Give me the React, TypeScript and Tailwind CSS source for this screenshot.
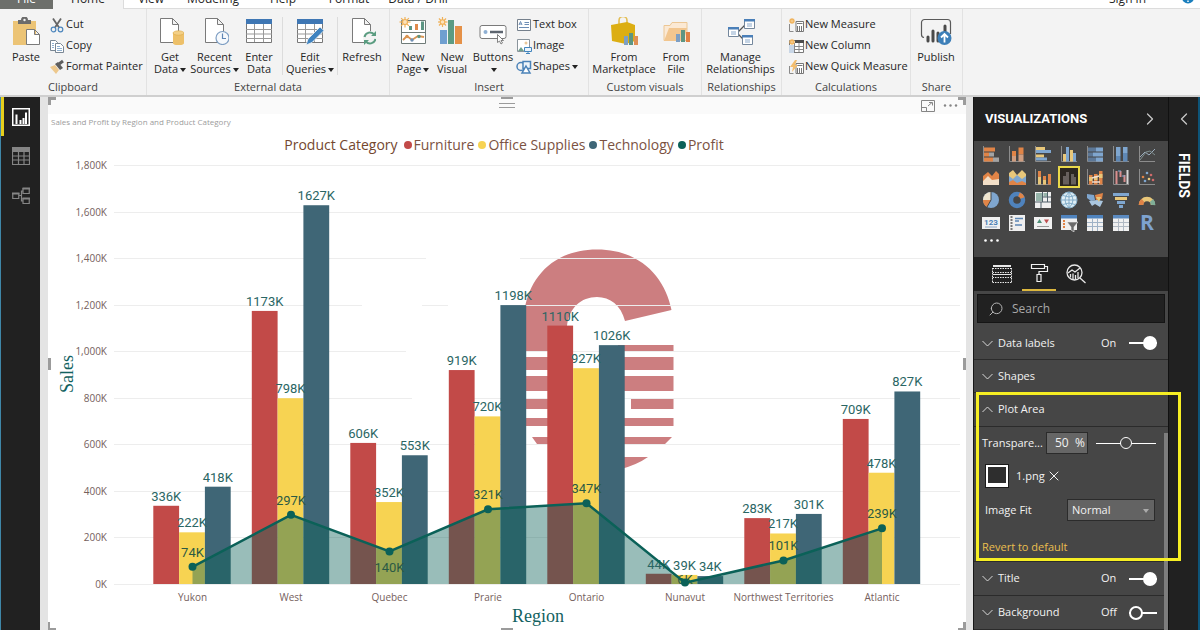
import React from "react";
import { ChevronLeft, ChevronRight, Search, X } from "lucide-react";

/* ---------- ribbon icons ---------- */

const Big = ({ children }: { children: React.ReactNode }) => (
  <svg viewBox="0 0 28 28" className="h-7 w-7 shrink-0" fill="none" aria-hidden="true">
    {children}
  </svg>
);

const Small = ({ children }: { children: React.ReactNode }) => (
  <svg viewBox="0 0 16 16" className="h-4 w-4 shrink-0" fill="none" aria-hidden="true">
    {children}
  </svg>
);

const Sheet = () => <path d="M4.5 1.5h12l6 6v18h-18zM16.5 1.5v6h6" fill="#fff" stroke="#7a7a7a" />;

const Spark = ({ x, y, r }: { x: number; y: number; r: number }) => (
  <g stroke="#f0b25a" strokeWidth="1.2" transform={`translate(${x} ${y})`}>
    {[0, 45, 90, 135].map((a) => (
      <path key={a} d={`M${-r} 0H${r}`} transform={`rotate(${a})`} />
    ))}
    <circle r={r / 2.2} fill="#fbe3bd" />
  </g>
);

const PasteIcon = () => (
  <Big>
    <path d="M1 4h23v24H1z" fill="#ecc476" />
    <path d="M6 3h3a3.500 3.500 0 0 1 7 0h3v4H6z" fill="#6b6b6b" />
    <circle cx="12.500" cy="3" r="1.200" fill="#f3f3f3" />
    <path d="M14.500 12.500h8l5 5v10h-13zM22.500 12.500v5h5" fill="#fff" stroke="#7a7a7a" />
  </Big>
);

const GetDataIcon = () => (
  <Big>
    <Sheet />
    <path d="M17 16v10c0 3 11 3 11 0V16z" fill="#edc069" />
    <ellipse cx="22.5" cy="16" rx="5.500" ry="2.200" fill="#f3cf86" stroke="#dba945" strokeWidth=".6" />
  </Big>
);

const RecentIcon = () => (
  <Big>
    <Sheet />
    <circle cx="21.500" cy="21" r="6.500" fill="#f6f9fc" stroke="#7f9fc4" strokeWidth="1.200" />
    <path d="M21.500 16.500V21.500H25" stroke="#5f86b5" strokeWidth="1.200" />
  </Big>
);

const Grid = () => (
  <>
    <path d="M1.500 2.500h25v23h-25z" fill="#fff" stroke="#777" />
    <path d="M1 2h26v5H1z" fill="#3f77b4" />
    <path d="M1 12.500h26M1 17h26M1 21.500h26M9.500 7v18M18.500 7v18" stroke="#999" />
  </>
);

const EnterIcon = () => (
  <Big>
    <Grid />
  </Big>
);

const EditIcon = () => (
  <Big>
    <Grid />
    <path d="M10 28l2-6L24 10l4 3.500L16 25.500z" fill="#3f83c0" stroke="#f3f3f3" strokeWidth=".8" />
  </Big>
);

const RefreshIcon = () => (
  <Big>
    <Sheet />
    <circle cx="22" cy="21" r="7" fill="#f3f3f3" />
    <path d="M16.500 20a5.500 5.500 0 0 1 10-2M27.500 22a5.500 5.500 0 0 1-10 2" stroke="#5a9c80" strokeWidth="2" />
    <path d="M28 14v5h-5zM16 28v-5h5z" fill="#5a9c80" />
  </Big>
);

const NewPageIcon = () => (
  <Big>
    <path d="M2.500 3.500h24v23h-24zM2.500 15.500h24" fill="#fff" stroke="#6f7b78" />
    <path d="M10 9h3v4h-3zM22 4.500h3V13h-3z" fill="#5c9583" />
    <path d="M16 7h3v6h-3z" fill="#e08a4c" />
    <path d="M4 23l4-4 5 4 6-4 6 1" stroke="#d99452" strokeWidth="1.800" />
    <circle cx="8" cy="19.500" r="1.700" fill="#d99452" />
    <circle cx="13" cy="23" r="1.700" fill="#6f8fb5" />
    <circle cx="20" cy="19.500" r="1.700" fill="#5c9583" />
    <Spark x={6} y={5} r={5.5} />
  </Big>
);

const NewVisualIcon = () => (
  <Big>
    <path d="M2 13h7v14H2z" fill="#6f9fd0" />
    <path d="M10 3h6v24h-6z" fill="#5c9b83" />
    <path d="M17 9h7v18h-7z" fill="#e59148" />
    <Spark x={4.500} y={5} r={5} />
  </Big>
);

const ButtonsIcon = () => (
  <Big>
    <rect x="1" y="8.500" width="26" height="13" rx="2" fill="#fff" stroke="#7a7a7a" />
    <circle cx="6.500" cy="15" r="2" fill="#8fb0d4" />
    <path d="M11 15h13" stroke="#5e6670" strokeWidth="2.500" />
    <path d="M18.500 17.500v8l2-1.500 1.500 3 1.500-1-1.500-2.500h2.500z" fill="#fff" stroke="#666" strokeWidth=".8" />
  </Big>
);

const MarketIcon = () => (
  <Big>
    <path d="M9 7V3.500a4 4 0 0 1 8 0V8" stroke="#e3bd52" strokeWidth="1.600" />
    <path d="M1 8l16-3 8 3v16l-9 3-14-3z" fill="#dcae12" />
    <path d="M14 19h4v9h-4z" fill="#7d9fc4" />
    <path d="M19 16h4v12h-4z" fill="#5c9583" />
    <path d="M24 19h4v9h-4z" fill="#df8f55" />
  </Big>
);

const FileIcon = () => (
  <Big>
    <path d="M2 8.500h6l2-3h15v18H2z" fill="#fbe9d4" stroke="#ecc795" />
    <path d="M2 24l5-13h18l-3 13z" fill="#f2c68f" />
    <path d="M14 17h4v8h-4z" fill="#7d9fc4" />
    <path d="M19 13h4v12h-4z" fill="#5c9583" />
    <path d="M24 15h4v10h-4z" fill="#df8044" />
  </Big>
);

const RelationIcon = () => (
  <Big>
    <path d="M11 15l7-7M11 17l5 5" stroke="#555" strokeWidth="1.300" />
    {[
      [1, 10],
      [17, 2],
      [15, 18],
    ].map(([x, y]) => (
      <g key={x}>
        <path d={`M${x + 0.5} ${y + 0.5}h10v9h-10z`} fill="#fff" stroke="#74879c" />
        <path d={`M${x} ${y}h11v2.500h-11z`} fill="#4a7fb8" />
        <path d={`M${x + 3} ${y + 5}h5M${x + 3} ${y + 7}h5`} stroke="#8aa9cb" />
      </g>
    ))}
  </Big>
);

const PublishIcon = () => (
  <svg viewBox="0 0 32 28" className="h-7 w-8 shrink-0" fill="none" aria-hidden="true">
    <path d="M4 20.500a3 3 0 0 1-2.500-3v-12a3 3 0 0 1 3-3h23a3 3 0 0 1 3 3V17" stroke="#5a5a5a" strokeWidth="1.200" />
    <path d="M8 20v4M13 14v10M18 16v8M25 9v9" stroke="#4a4a4a" strokeWidth="3" strokeLinecap="round" />
    <circle cx="24.500" cy="21" r="7" fill="#3d7fb8" />
    <path d="M24.500 25.500v-8M21 20.500l3.500-3.500 3.500 3.500" stroke="#fff" strokeWidth="1.800" />
  </svg>
);

const CutIcon = () => (
  <Small>
    <path d="M4 1.500l6 9M12 1.500l-6 9" stroke="#666" strokeWidth="1.800" />
    <circle cx="4.500" cy="12.500" r="2.300" stroke="#4d86bd" strokeWidth="1.200" />
    <circle cx="11.500" cy="12.500" r="2.300" stroke="#4d86bd" strokeWidth="1.200" />
  </Small>
);

const CopyIcon = () => (
  <Small>
    <path d="M1.500 2.500h5l2 2v8h-7z" fill="#fff" stroke="#7a8794" />
    <path d="M6.500 5.500h5l3 3v6h-8z" fill="#fff" stroke="#7a8794" />
    <path d="M8 8.500h3M8 10.500h5M8 12.500h5M3 5.500h2M3 7.500h2M3 9.500h2" stroke="#8fb0d0" />
  </Small>
);

const PainterIcon = () => (
  <Small>
    <path d="M1 8l5-2 4 5-3 4z" fill="#edc88d" />
    <path d="M6 5l3-2 5 6-3 2z" fill="#5d5d5d" />
    <path d="M10 5l4-3" stroke="#5d5d5d" strokeWidth="3" />
  </Small>
);

const TextBoxIcon = () => (
  <Small>
    <path d="M1.500 2.500h13v11h-13z" fill="#fff" stroke="#75808c" />
    <path d="M3 8l1.500-3.500L6 8M3.500 7h2M8.500 5.500h4.500M8.500 7.500h4.500M3 10.500h10" stroke="#6d8db5" />
  </Small>
);

const ImageIcon = () => (
  <Small>
    <path d="M1.500 1.500h12v12h-12z" fill="#fff" stroke="#8a949c" />
    <path d="M2 13l3-4 3 4z" fill="#6fa08c" />
    <path d="M8.500 9.500h7v4h-7zM10 15.500h4M12 13.500v2" fill="#eaf3fb" stroke="#4285bd" />
    <circle cx="10" cy="5" r="1.500" fill="#e9c79a" />
  </Small>
);

const ShapesIcon = () => (
  <Small>
    <circle cx="5" cy="7.500" r="4" stroke="#4b82b8" strokeWidth="1.500" />
    <path d="M7 2.500h7.500v7H7z" stroke="#4b82b8" strokeWidth="1.500" fill="#eef4fa" />
    <path d="M10 7l4 7H6z" stroke="#4b82b8" strokeWidth="1.500" fill="#fff" />
  </Small>
);

const MeasureIcon = ({ quick }: { quick?: boolean }) => (
  <Small>
    <path d="M1.500 7v7.500h4" stroke="#8a8a8a" />
    <path d="M8 4.500h7.500v10H8z" fill="#fff" stroke="#777" />
    <path d="M9 6.500h5.500M9.500 9v5M11.500 9v5M13.500 9v5" stroke="#777" />
    {quick ? <path d="M7 1L2 8h3l-1 5 6-7H7l2-5z" fill="#f3bd6d" /> : <Spark x={4} y={4} r={3} />}
  </Small>
);

const ColumnIcon = () => (
  <Small>
    <path d="M1.500 2.500h14v12h-14z" fill="#fff" stroke="#777" />
    <path d="M7 2h9v3H7z" fill="#4c4c4c" />
    <path d="M1 7h5v8H1z" fill="#c8d6e6" />
    <path d="M6.500 5v9M11 5v9M6 8.500h9.500M6 11.500h9.500" stroke="#888" />
    <Spark x={4} y={4} r={3} />
  </Small>
);

/* ---------- ribbon ---------- */

const Caret = () => (
  <svg viewBox="0 0 6 4" className="ml-0.5 inline-block h-1 w-1.5 align-middle" aria-hidden="true">
    <path d="M0 0h6L3 4z" fill="#222" />
  </svg>
);

const BigButton = ({
  icon,
  lines,
  caret,
  width,
}: {
  icon: React.ReactNode;
  lines: string[];
  caret?: boolean;
  width: string;
}) => (
  <button type="button" className={`flex shrink-0 flex-col items-center pt-2 ${width}`}>
    {icon}
    <span className="mt-1.5 whitespace-nowrap text-center text-[11px] leading-3">
      {lines.map((l, i) => (
        <span key={i} className="block">
          {l}
          {caret && i === lines.length - 1 && <Caret />}
        </span>
      ))}
    </span>
  </button>
);

const SmallButton = ({ icon, text, caret }: { icon: React.ReactNode; text: string; caret?: boolean }) => (
  <button type="button" className="flex h-[21px] items-center gap-px whitespace-nowrap text-[11px]">
    {icon}
    <span>
      {text}
      {caret && <Caret />}
    </span>
  </button>
);

const Group = ({ title, width, children }: { title: string; width: string; children: React.ReactNode }) => (
  <section className={`flex shrink-0 flex-col border-r border-[#e2e2e2] ${width}`}>
    <div className="flex flex-1">{children}</div>
    <h2 className="text-center text-[11px] leading-4 text-[#444]">{title}</h2>
  </section>
);

const Stack = ({ children }: { children: React.ReactNode }) => (
  <div className="flex flex-col items-start pt-[5px]">{children}</div>
);

const Divider = () => <span className="mx-0.5 mt-2 mb-1 w-px bg-[#dcdcdc]" />;

const tabs = [
  ["View", "w-[54px]"],
  ["Modeling", "w-[70px]"],
  ["Help", "w-[70px]"],
  ["Format", "w-[62px]"],
  ["Data / Drill", "w-[76px]"],
];

const Ribbon = () => (
  <header className="shrink-0 border-b-2 border-[#cfcfcf] bg-[#f3f3f3] text-[#262626]">
    <nav className="flex h-[9px] items-end overflow-hidden bg-white text-xs leading-4">
      <button type="button" className="w-[53px] bg-[#6d6f6b] pb-0.5 text-white">
        File
      </button>
      <button type="button" className="w-[70px] bg-[#f3f3f3] pb-0.5">
        Home
      </button>
      <div className="flex flex-1 items-end border-b border-l border-[#dcdcdc] pb-px">
        {tabs.map(([t, w]) => (
          <button type="button" key={t} className={`whitespace-nowrap ${w}`}>
            {t}
          </button>
        ))}
        <a href="#signin" className="ml-auto">
          Sign in
        </a>
        <button type="button" aria-label="Help" className="mr-1.5 ml-9 h-4 w-3">
          <svg viewBox="0 0 12 16" className="h-4 w-3" aria-hidden="true">
            <circle cx="6" cy="6.500" r="6" fill="#1b7fbd" />
            <path d="M6 7v1M6 9.500v1.500" stroke="#fff" strokeWidth="1.500" />
          </svg>
        </button>
      </div>
    </nav>
    <div className="flex h-[86px] overflow-hidden">
      <Group title="Clipboard" width="w-[147px]">
        <BigButton icon={<PasteIcon />} lines={["Paste"]} width="ml-[3px] w-[46px]" />
        <Stack>
          <SmallButton icon={<CutIcon />} text="Cut" />
          <SmallButton icon={<CopyIcon />} text="Copy" />
          <SmallButton icon={<PainterIcon />} text="Format Painter" />
        </Stack>
      </Group>
      <Group title="External data" width="w-[243px]">
        <BigButton icon={<GetDataIcon />} lines={["Get", "Data"]} caret width="ml-0.5 w-[42px]" />
        <BigButton icon={<RecentIcon />} lines={["Recent", "Sources"]} caret width="w-[47px]" />
        <BigButton icon={<EnterIcon />} lines={["Enter", "Data"]} width="w-[42px]" />
        <Divider />
        <BigButton icon={<EditIcon />} lines={["Edit", "Queries"]} caret width="w-[50px]" />
        <Divider />
        <BigButton icon={<RefreshIcon />} lines={["Refresh"]} width="w-[44px]" />
      </Group>
      <Group title="Insert" width="w-[199px]">
        <BigButton icon={<NewPageIcon />} lines={["New", "Page"]} caret width="ml-1 w-[38px]" />
        <BigButton icon={<NewVisualIcon />} lines={["New", "Visual"]} width="w-[40px]" />
        <BigButton icon={<ButtonsIcon />} lines={["Buttons", ""]} caret width="mr-0.5 w-[42px]" />
        <Stack>
          <SmallButton icon={<TextBoxIcon />} text="Text box" />
          <SmallButton icon={<ImageIcon />} text="Image" />
          <SmallButton icon={<ShapesIcon />} text="Shapes" caret />
        </Stack>
      </Group>
      <Group title="Custom visuals" width="w-[113px]">
        <BigButton icon={<MarketIcon />} lines={["From", "Marketplace"]} width="ml-px w-[68px]" />
        <BigButton icon={<FileIcon />} lines={["From", "File"]} width="w-[36px]" />
      </Group>
      <Group title="Relationships" width="w-[80px]">
        <BigButton icon={<RelationIcon />} lines={["Manage", "Relationships"]} width="w-[77px]" />
      </Group>
      <Group title="Calculations" width="w-[129px]">
        <div className="pl-1.5">
          <Stack>
            <SmallButton icon={<MeasureIcon />} text="New Measure" />
            <SmallButton icon={<ColumnIcon />} text="New Column" />
            <SmallButton icon={<MeasureIcon quick />} text="New Quick Measure" />
          </Stack>
        </div>
      </Group>
      <Group title="Share" width="w-[52px]">
        <BigButton icon={<PublishIcon />} lines={["Publish"]} width="w-[50px]" />
      </Group>
    </div>
  </header>
);

/* ---------- left rail ---------- */

const Rail = () => (
  <nav className="flex w-10 shrink-0 flex-col border-l border-[#3f87a8] bg-[#212121]">
    <button type="button" aria-label="Report" className="flex h-[39px] items-center justify-center border-l-[3px] border-[#e6cf1d] pr-0.5">
      <svg viewBox="0 0 18 18" className="h-[18px] w-[18px]" fill="none">
        <path d="M.75.75h16.500v16.500H.75z" stroke="#fff" strokeWidth="1.500" />
        <path d="M4.500 16V6.500M8.500 16v-4M11.500 16v-6M14 16V4.500" stroke="#fff" strokeWidth="2" />
      </svg>
    </button>
    <button type="button" aria-label="Data" className="flex h-10 items-center justify-center">
      <svg viewBox="0 0 18 18" className="h-[18px] w-[18px]" fill="none">
        <path d="M.5.5h17v17H.5zM.5 9h17M.5 13h17M6.500 4v13M12 4v13" stroke="#858585" strokeWidth="1.200" />
        <path d="M0 0h18v5H0z" fill="#858585" />
      </svg>
    </button>
    <button type="button" aria-label="Model" className="flex h-10 items-center justify-center">
      <svg viewBox="0 0 18 18" className="h-[18px] w-[18px]" fill="none">
        <path d="M.75 6.500h6v5h-6zM11 1.500h6.250v5H11zM11 11.500h6.250v5H11zM7 8.500h2.500M11 4H9.500v10H11" stroke="#858585" strokeWidth="1.200" />
        <path d="M0 5.500h7.500v2H0zM10.500.5h7.500v2h-7.500zM10.500 10.500h7.500v2h-7.500z" fill="#858585" />
      </svg>
    </button>
  </nav>
);

/* ---------- chart ---------- */

const RED = "#c24a48";
const YELLOW = "#f7d352";
const BLUE = "#3f6676";
const TEAL = "#0b6158";

const data = [
  { name: "Yukon", bars: [336, 222, 418], profit: 74 },
  { name: "West", bars: [1173, 798, 1627], profit: 297 },
  { name: "Quebec", bars: [606, 352, 553], profit: 140, below: true },
  { name: "Prarie", bars: [919, 720, 1198], profit: 321 },
  { name: "Ontario", bars: [1110, 927, 1026], profit: 347 },
  { name: "Nunavut", bars: [44, 39, 34], profit: 6 },
  { name: "Northwest Territories", bars: [283, 217, 301], profit: 101 },
  { name: "Atlantic", bars: [709, 478, 827], profit: 239 },
];

const BASE = 428;
const PER_K = 0.2328;
const yOf = (v: number) => BASE - v * PER_K;
const cx = (i: number) => 144.5 + i * 98.5;
const BAR = 25.8;
const colors = [RED, YELLOW, BLUE];

const Chart = () => {
  const line = data.map((d, i) => `${cx(i)},${yOf(d.profit)}`).join(" ");
  return (
    <svg viewBox="0 0 918 474" className="block h-auto w-full" role="img" aria-label="Sales and Profit by Region">
      <g fill="#cc7e80">
        <path d="M477 196V152C482 122 505 93.500 549 93.500C592 93.500 617 121 623.500 154L577 165C573 149 562 141 549 141C533 141 521 152 519 170V196z" />
        <path d="M477 201h43v13h-43zM477 220h43v15h-43zM477 242h43v11h-43zM477 262h43v8h-43zM484 281h36v7h-31z" />
        <path d="M570 189h55.500v7H570zM570 201h55.500v13H570zM570 220h55.500v15H570zM583 242h42.500v11H583zM570 262h55.500v8H570zM570 281h54l-7 7h-47zM570 301h30q-11 8-30 13z" />
      </g>
      <g stroke="#ededed">
        {Array.from({ length: 10 }, (_, i) => (
          <path key={i} d={`M66 ${Math.round(yOf(i * 200)) + 0.5}H912`} />
        ))}
      </g>
      <path d="M378 98h94v8h-94zM314 144h60v8h-60zM400 144h58v8h-58zM358 190h100v8H358zM364 237h40v8h-40z" fill="#fff" />
      <g className="font-['Open_Sans',sans-serif] text-[10px]" fill="#75605c" textAnchor="end">
        {Array.from({ length: 10 }, (_, i) => (
          <text key={i} x="59" y={yOf(i * 200) + 4}>
            {`${(i * 200).toLocaleString("en-US")}K`}
          </text>
        ))}
      </g>
      {data.map((d, i) =>
        d.bars.map((v, j) => (
          <rect
            key={`${i}-${j}`}
            x={cx(i) - 0.5 + (j - 1.5) * BAR}
            y={yOf(v)}
            width={BAR}
            height={v * PER_K}
            fill={colors[j]}
          />
        )),
      )}
      <polygon points={`${cx(0)},${BASE} ${line} ${cx(7)},${BASE}`} fill={TEAL} fillOpacity=".42" />
      <g className="font-['Roboto',sans-serif] text-[13px]" textAnchor="middle" fill="#2a6664">
        {data.map((d, i) =>
          d.bars.map((v, j) => (
            <text key={`${i}-${j}`} x={cx(i) - 0.5 + (j - 1) * BAR} y={yOf(v) - 5}>{`${v}K`}</text>
          )),
        )}
      </g>
      <g className="font-['Roboto',sans-serif] text-[13px]" textAnchor="middle" fill="#2b5a44">
        {data.map((d, i) => (
          <text key={d.name} x={cx(i)} y={yOf(d.profit) + (d.below ? 21 : d.profit < 10 ? 1 : -10)}>
            {`${d.profit}K`}
          </text>
        ))}
      </g>
      <polyline points={line} fill="none" stroke={TEAL} strokeWidth="2.500" />
      {data.map((d, i) => (
        <circle key={d.name} cx={cx(i)} cy={yOf(d.profit)} r="4" fill={TEAL} />
      ))}
      <g className="font-['Open_Sans',sans-serif] text-[10px]" fill="#75605c" textAnchor="middle">
        {data.map((d, i) => (
          <text key={d.name} x={cx(i)} y="445">
            {d.name}
          </text>
        ))}
      </g>
      <g className="font-['Liberation_Serif',serif] text-[18px]" fill="#12625f" textAnchor="middle">
        <text x="490" y="466">
          Region
        </text>
        <text transform="translate(25 218) rotate(-90)">Sales</text>
      </g>
    </svg>
  );
};

const legend = [
  ["Furniture", "bg-[#c24a48]"],
  ["Office Supplies", "bg-[#f7d352]"],
  ["Technology", "bg-[#3f6676]"],
  ["Profit", "bg-[#0b6158]"],
];

const handle = "absolute border-[#9b9b9b]";

const Canvas = () => (
  <main className="min-w-0 flex-1 bg-[#e4e4e4] pr-[7px] pl-2">
    <div className="relative bg-white">
      <div className="flex h-[17px] items-center justify-end gap-2 bg-[#fafafa] pr-2">
        <button type="button" aria-label="Focus mode">
          <svg viewBox="0 0 14 12" className="h-3 w-3.5" fill="none" stroke="#858585">
            <path d="M.5.5h13v11H.5zM.5 7.500h5v4M7 6l4-3.500M8 2.500h3.500V5.500" />
          </svg>
        </button>
        <button type="button" aria-label="More options">
          <svg viewBox="0 0 15 3" className="h-[3px] w-[15px]" fill="#858585">
            <circle cx="2" cy="1.500" r="1.200" />
            <circle cx="7.500" cy="1.500" r="1.200" />
            <circle cx="13" cy="1.500" r="1.200" />
          </svg>
        </button>
      </div>
      <h1 className="px-[3px] text-[8px] leading-4 text-[#9c9c9c]">Sales and Profit by Region and Product Category</h1>
      <div className="flex items-center justify-center gap-1 pt-1.5 pr-1.5 pb-0.5 font-['Open_Sans',sans-serif] text-sm leading-[18px] text-[#7b5242]">
        <span className="mr-0.5 font-medium text-[#74472f]">Product Category</span>
        {legend.map(([t, c]) => (
          <span key={t} className="flex items-center gap-0.5">
            <i className={`h-2 w-2 rounded-full ${c}`} />
            {t}
          </span>
        ))}
      </div>
      <Chart />
      <span className={`${handle} top-0 left-0 h-2 w-2 border-t-[3px] border-l-[3px]`} />
      <span className={`${handle} top-0 right-0 h-2 w-2 border-t-[3px] border-r-[3px]`} />
      <span className={`${handle} bottom-0 left-0 h-2 w-2 border-b-2 border-l-2`} />
      <span className={`${handle} right-0 bottom-0 h-2 w-2 border-r-[3px] border-b-2`} />
      <span className={`${handle} top-1/2 left-0 h-3 -translate-y-1/2 border-l-[3px]`} />
      <span className={`${handle} top-1/2 right-0 h-3 -translate-y-1/2 border-r-[3px]`} />
      <span className={`${handle} top-0 left-1/2 w-3 -translate-x-1/2 border-t-2`} />
      <span className={`${handle} top-1.5 left-1/2 h-[5px] w-4 -translate-x-1/2 border-y`} />
      <span className={`${handle} bottom-0 left-1/2 w-3 -translate-x-1/2 border-b-2`} />
    </div>
  </main>
);

/* ---------- visualization icons, each on an 18 x 18 grid ---------- */

const O = "#e08447";
const Y = "#e8c77a";
const B = "#7fa6cf";
const G = "#a3a3a3";
const axis = <path d="M1.500 1v15.500H17" stroke="#8c8c8c" fill="none" />;

const visuals: { name: string; art: React.ReactNode }[] = [
  { name: "Stacked bar", art: <>{axis}<path d="M2 2.500h6v4H2zM2 7.500h5v4H2zM2 12.500h9v4H2z" fill={O} /><path d="M7 7.500h5v4H7zM11 12.500h6v4h-6z" fill={G} /><path d="M8 2.500h5v4H8z" fill={O} /></> },
  { name: "Stacked column", art: <>{axis}<path d="M4 6h4v5H4zM10.500 2.500h5v7h-5z" fill={O} /><path d="M4 11h4v5.500H4zM10.500 9.500h5v7h-5z" fill="#cf9d80" /></> },
  { name: "Clustered bar", art: <>{axis}<path d="M2 2h9v3H2zM2 9.500h8v3H2z" fill={Y} /><path d="M2 5h15v3H2zM2 12.500h11v3H2z" fill={B} /></> },
  { name: "Clustered column", art: <>{axis}<path d="M3 9h3v7.500H3zM10 5h3v11.500h-3z" fill={Y} /><path d="M6 2h3v14.500H6zM13 8h3v8.500h-3z" fill={B} /></> },
  { name: "100% stacked bar", art: <>{axis}<path d="M2 2.500h8v4H2zM2 7.500h5v4H2zM2 12.500h8v4H2z" fill="#5d7897" /><path d="M10 2.500h7v4h-7zM7 7.500h10v4H7zM10 12.500h7v4h-7z" fill={B} /></> },
  { name: "100% stacked column", art: <>{axis}<path d="M4 2h4.500v9H4zM11 2h4.500v6H11z" fill={B} /><path d="M4 11h4.500v5.500H4zM11 8h4.500v8.500H11z" fill="#5f88b5" /></> },
  { name: "Line", art: <>{axis}<path d="M2 12l5-5 4 3 6-6" stroke="#9aabbc" fill="none" /><path d="M2 15l6-8 4-1 5 4" stroke="#7f8f8f" fill="none" /></> },
  { name: "Area", art: <><path d="M1 8l5-4 4 4 4-5 3 3v11H1z" fill={O} /><path d="M1 13l5-5 4 4 7-1v6H1z" fill="#f2dfc8" /></> },
  { name: "Stacked area", art: <><path d="M1 5l4-3 4 5 5-5 4 4v11H1z" fill={Y} /><path d="M1 8l4 3 4-4 5 4 4-3v9H1z" fill={B} /><path d="M1 14l4-2 4 3 5-2 4 2v2H1z" fill={O} /></> },
  { name: "Line and stacked column", art: <>{axis}<path d="M4 3h3v13H4zM9 8h3v8.500H9zM14 6h3v10.500h-3z" fill={O} /><path d="M4 9h3v7.500H4zM9 12h3v4.500H9z" fill={Y} /></> },
  { name: "Line and clustered column", art: <><path d="M0 0h18v18H0z" fill="#2c2722" /><path d="M3 8h3v8.500H3zM6 4h3v12.500H6zM11 6h3v10.500h-3zM14 9h2v7.500h-2z" fill="#67605d" /></> },
  { name: "Ribbon", art: <>{axis}<path d="M3 7h3.500v9.500H3zM8 6h3.500v10.500H8zM13 3h3.500v13.500H13z" fill={O} /><path d="M3 9h3.500v4H3zM8 8h3.500v4H8zM13 6h3.500v4H13z" fill={Y} /><path d="M6 10l7-2M6 14h8" stroke="#f0ddd0" strokeWidth="1.600" /></> },
  { name: "Waterfall", art: <>{axis}<path d="M4.500 3v13M8.500 3v6M12.500 7v7" stroke="#d98e8e" strokeWidth="2" /><path d="M15.500 2v14" stroke="#d8d8d8" strokeWidth="2" /><path d="M6 3h3M10 8h3" stroke={B} /></> },
  { name: "Scatter", art: <>{axis}<g><circle cx="5" cy="9" r="1.300" fill={O} /><circle cx="9" cy="5" r="1.300" fill={B} /><circle cx="13" cy="7" r="1.300" fill="#cf6a6a" /><circle cx="7" cy="13" r="1.300" fill={B} /><circle cx="11" cy="11" r="1.300" fill={Y} /><circle cx="15" cy="12" r="1.300" fill="#cf6a6a" /></g></> },
  { name: "Pie", art: <><circle cx="9" cy="9" r="8" fill={B} /><path d="M9 9V1a8 8 0 0 0-8 8z" fill="#f0e5cf" /><path d="M9 9H1a8 8 0 0 0 4 7z" fill={O} /><path d="M9 1v8l-4 7" stroke="#464646" fill="none" /></> },
  { name: "Donut", art: <><circle cx="9" cy="9" r="6" stroke="#4f83bd" strokeWidth="4.500" fill="none" /><path d="M11 3.500a6 6 0 0 1 3.500 3.500" stroke={O} strokeWidth="4.500" fill="none" /></> },
  { name: "Treemap", art: <><path d="M1 1h16v16H1z" fill="#f0f0f0" /><path d="M2 2h6v8H2zM9.500 2H13v3.500H9.500z" fill="#96b4a9" /><path d="M1 11h16M8.500 1v10M13.500 1v10M9 6h8M7 11v6" stroke="#50616b" /></> },
  { name: "Map", art: <><circle cx="9" cy="9" r="8" fill="#dfeef5" stroke="#8fb7d0" /><path d="M1 9h16M9 1v16M3 4.500q6 3 12 0M3 13.500q6-3 12 0M9 1q-8 8 0 16M9 1q8 8 0 16" stroke="#6f9fc0" fill="none" strokeWidth=".8" /></> },
  { name: "Filled map", art: <><path d="M1 3l7 1 1 5-4 1-4-3z" fill={B} /><path d="M9 4l8-2-1 6-6 1z" fill={O} /><path d="M3 10l8-1 6 1-3 6-5-3-3 2z" fill="#aac6df" /><path d="M10 6l5 0-2 5z" fill={Y} /></> },
  { name: "Funnel", art: <><path d="M1 2h16v3H1z" fill={B} /><path d="M3 6h12v3H3z" fill={Y} /><path d="M5 10h8v3H5z" fill={B} /><path d="M7 14h4v3H7z" fill={B} /></> },
  { name: "Gauge", art: <><path d="M3 14a6 6 0 0 1 12 0" stroke={Y} strokeWidth="4.500" fill="none" /><path d="M3 14a6 6 0 0 1 2-4.500" stroke={O} strokeWidth="4.500" fill="none" /><path d="M13.500 9.500A6 6 0 0 1 15 14" stroke="#7fae98" strokeWidth="4.500" fill="none" /></> },
  { name: "Card", art: <><path d="M0 3h18v12H0z" fill="#f1f1f1" /><text x="9" y="10.500" textAnchor="middle" className="font-['Roboto',sans-serif] text-[8px] font-bold" fill="#4a7fb5">123</text><path d="M3 13h12" stroke="#8aa5c4" /></> },
  { name: "Multi-row card", art: <><path d="M1 1h16v16H1z" fill="#efefef" /><path d="M3.500 2v14" stroke="#777" strokeWidth="2" strokeDasharray="2 1" /><path d="M7 4.500h8M7 7h4M7 11h7" stroke="#5d87b5" strokeWidth="1.300" /></> },
  { name: "KPI", art: <><path d="M0 3h18v12H0z" fill="#f1f1f1" /><path d="M3 9l2.500-4L8 9z" fill="#4f8f78" /><path d="M10 5.500h5L12.500 9.500z" fill="#bf5050" /><path d="M3 12.500h12" stroke="#999" /></> },
  { name: "Slicer", art: <><path d="M1 1h16v15H1z" fill="#efefef" /><path d="M1 1h16v3.500H1z" fill="#4f83bd" /><path d="M3 7h2M3 10h2M3 13h2" stroke={O} strokeWidth="2" /><path d="M7 8h11l-4 5v5l-3-2v-3z" fill="#6b6b6b" stroke="#efefef" strokeWidth=".6" /></> },
  { name: "Table", art: <><path d="M1 1h16v16H1z" fill="#f1f1f1" /><path d="M1 1h16v3.500H1z" fill="#4f83bd" /><path d="M1 8.500h16M1 12.500h16M6.500 4v13M11.500 4v13" stroke="#9fb2c6" /></> },
  { name: "Matrix", art: <><path d="M1 1h16v16H1z" fill="#f1f1f1" /><path d="M1 1h16v3.500H1z" fill="#5b8ac0" /><path d="M1 8.500h16M1 12.500h16M6.500 4v13M11.500 4v13" stroke="#b1bac4" /></> },
  { name: "R script", art: <text x="9" y="16" textAnchor="middle" className="font-['Open_Sans',sans-serif] text-[21px] font-bold" fill="#7ea2cf">R</text> },
];

/* ---------- right panes ---------- */

const Toggle = ({ id, on }: { id: string; on: boolean }) => (
  <input
    id={id}
    type="checkbox"
    role="switch"
    defaultChecked={on}
    className="relative h-3.5 w-7 appearance-none before:absolute before:inset-x-0 before:top-1.5 before:h-0.5 before:bg-white after:absolute after:top-0 after:left-0 after:h-3.5 after:w-3.5 after:rounded-full after:border-2 after:border-white after:bg-[#464646] checked:after:left-3.5 checked:after:bg-white"
  />
);

const Row = ({ title, state, open }: { title: string; state?: boolean; open?: boolean }) => {
  const id = `opt-${title.replace(" ", "-").toLowerCase()}`;
  return (
    <div className="flex h-[34px] items-center border-b border-[#2b2b2b] pr-[11px] pl-2 text-[11px] text-[#f2f2f2]">
      <button type="button" className="flex items-center gap-[5px]">
        <svg viewBox="0 0 11 7" className="h-[7px] w-[11px]" fill="none" stroke="#d8d8d8" aria-hidden="true">
          <path d={open ? "M.5 6l5-5 5 5" : "M.5 1l5 5 5-5"} />
        </svg>
        <span>{title}</span>
      </button>
      {state !== undefined && (
        <label htmlFor={id} className="ml-auto flex items-center">
          <span className="w-7">{state ? "On" : "Off"}</span>
          <Toggle id={id} on={state} />
        </label>
      )}
    </div>
  );
};

const PlotArea = () => (
  <div className="relative">
    <Row title="Plot Area" open />
    <div className="flex flex-col border-b border-[#2b2b2b] pr-3 pl-2 text-[11px] text-[#f2f2f2]">
      <div className="flex h-8 items-center">
        <label htmlFor="transparency" className="w-16">
          Transpare...
        </label>
        <span className="flex h-[22px] w-[42px] items-center border border-[#2b2b2b] bg-[#666] text-xs">
          <input id="transparency" type="text" defaultValue="50" className="w-6 pl-2" />
          <span className="pl-1">%</span>
        </span>
        <input
          type="range"
          aria-label="Transparency"
          defaultValue={50}
          className="ml-2 h-3 w-[60px] appearance-none bg-[linear-gradient(#fff,#fff)] bg-[length:100%_1px] bg-center bg-no-repeat [&::-webkit-slider-thumb]:h-3 [&::-webkit-slider-thumb]:w-3 [&::-webkit-slider-thumb]:appearance-none [&::-webkit-slider-thumb]:rounded-full [&::-webkit-slider-thumb]:border [&::-webkit-slider-thumb]:border-white [&::-webkit-slider-thumb]:bg-[#464646]"
        />
      </div>
      <div className="flex h-[34px] items-center gap-2 pl-1">
        <span className="h-[22px] w-[22px] border-2 border-b-4 border-white bg-[#2e2e2e] outline outline-[#1b1b1b]" />
        <span className="flex items-center gap-px">
          1.png
          <button type="button" aria-label="Remove image">
            <X className="h-4 w-4" strokeWidth={1.5} />
          </button>
        </span>
      </div>
      <div className="flex h-[34px] items-center justify-between pr-px pl-[3px]">
        <label htmlFor="fit">Image Fit</label>
        <span className="relative">
          <select id="fit" className="block h-[22px] w-[88px] appearance-none border border-[#2b2b2b] bg-[#636363] pl-1 text-[11px]">
            <option>Normal</option>
          </select>
          <svg viewBox="0 0 6 4" className="pointer-events-none absolute top-2.5 right-1.5 h-1 w-1.5" aria-hidden="true">
            <path d="M0 0h6L3 4z" fill="#aaa" />
          </svg>
        </span>
      </div>
      <a href="#revert" className="mt-2 mb-0.5 flex h-6 items-center text-[#eabf4e]">
        Revert to default
      </a>
    </div>
    <span className="pointer-events-none absolute -top-px -right-[13px] bottom-px left-0.5 z-10 border-[3px] border-[#f6ee23]" />
    <span className="absolute top-10 right-0 bottom-0 w-1 bg-[#7d7d7d]" />
  </div>
);

const Visualizations = () => (
  <aside className="flex w-[195px] shrink-0 flex-col border-l border-[#181818] bg-[#464646]">
    <div className="flex h-11 shrink-0 items-center justify-between bg-[#212121] pr-2 pl-[11px] text-white">
      <h2 className="font-['Roboto',sans-serif] text-[13px] font-bold">VISUALIZATIONS</h2>
      <button type="button" aria-label="Collapse pane">
        <ChevronRight className="h-5 w-5 text-[#c8c8c8]" strokeWidth={1.5} />
      </button>
    </div>
    <div className="h-[116px] shrink-0 px-1 pt-0.5">
      <div className="grid grid-cols-[repeat(7,26px)]">
        {visuals.map((v, i) => (
          <button
            type="button"
            key={v.name}
            aria-label={v.name}
            className={`mx-auto mb-px flex h-[22px] w-[22px] items-center justify-center ${i === 10 ? "border-2 border-[#e9d84a]" : ""}`}
          >
            <svg viewBox="0 0 18 18" className="h-[18px] w-[18px] shrink-0" fill="none">
              {v.art}
            </svg>
          </button>
        ))}
      </div>
      <button type="button" aria-label="More visuals" className="mt-1 block pl-1.5">
        <svg viewBox="0 0 15 3" className="block h-[3px] w-[15px]" fill="#fff">
          <circle cx="1.500" cy="1.500" r="1.300" />
          <circle cx="7.500" cy="1.500" r="1.300" />
          <circle cx="13.500" cy="1.500" r="1.300" />
        </svg>
      </button>
    </div>
    <div className="flex h-[34px] shrink-0 items-stretch gap-[3px] bg-[#212121] pl-[11px]">
      <button type="button" aria-label="Fields" className="flex w-[34px] items-center justify-center">
        <svg viewBox="0 0 20 20" className="h-5 w-5" fill="none" stroke="#e8e8e8">
          <path d="M1 2h18" strokeWidth="2" />
          <path d="M.5 4.500h19M.5 8.500h19M.5 13.500h19M.5 18.500h19M.5 4v14M19.500 4v14" strokeDasharray="1.500 1" />
          <path d="M1 10.500h18" />
        </svg>
      </button>
      <button type="button" aria-label="Format" className="flex w-[34px] items-center justify-center border-b-2 border-[#dcb73e]">
        <svg viewBox="0 0 20 20" className="h-5 w-5" fill="none" stroke="#f0f0f0" strokeWidth="1.200">
          <path d="M2.500 1.500h13v4h-13zM15.500 3.500h3v5h-8.500v3M8 11.500h4v7H8z" />
        </svg>
      </button>
      <button type="button" aria-label="Analytics" className="flex w-[34px] items-center justify-center">
        <svg viewBox="0 0 20 20" className="h-5 w-5" fill="none" stroke="#e8e8e8" strokeWidth="1.300">
          <circle cx="8.500" cy="8.500" r="7.500" />
          <path d="M14 14l5.500 5M2 9l4-3 3 2 5-4M4.500 13.500V10M7 15.500V9.500M9.500 15.500V11M12 14V8" />
        </svg>
      </button>
    </div>
    <div className="px-[3px] pt-[3px] pb-1">
      <label className="flex h-[29px] items-center gap-2 border border-[#151515] bg-[#212121] pl-2.5">
        <Search className="h-4 w-4 shrink-0 -scale-x-100 text-[#b5b5b5]" strokeWidth={1.5} />
        <input type="search" placeholder="Search" aria-label="Search" className="w-full min-w-0 text-xs outline-none placeholder:text-[#a8a8a8]" />
      </label>
    </div>
    <Row title="Data labels" state />
    <Row title="Shapes" />
    <PlotArea />
    <div className="border-r-4 border-[#7d7d7d] [&>div]:pr-[7px]">
      <Row title="Title" state />
      <Row title="Background" state={false} />
    </div>
  </aside>
);

const Fields = () => (
  <aside className="flex w-8 shrink-0 flex-col items-center border-r-2 border-l border-r-[#0d5478] border-l-[#111] bg-[#212121]">
    <button type="button" aria-label="Expand pane" className="flex h-11 items-center">
      <ChevronLeft className="h-5 w-5 text-[#c8c8c8]" strokeWidth={1.5} />
    </button>
    <h2 className="mt-3 font-['Roboto',sans-serif] text-sm font-bold text-white [writing-mode:vertical-rl]">FIELDS</h2>
  </aside>
);

export default function App() {
  return (
    <div className="flex h-screen flex-col overflow-hidden bg-[#e4e4e4] font-['Open_Sans',sans-serif]">
      <Ribbon />
      <div className="flex min-h-0 flex-1">
        <Rail />
        <Canvas />
        <Visualizations />
        <Fields />
      </div>
    </div>
  );
}
